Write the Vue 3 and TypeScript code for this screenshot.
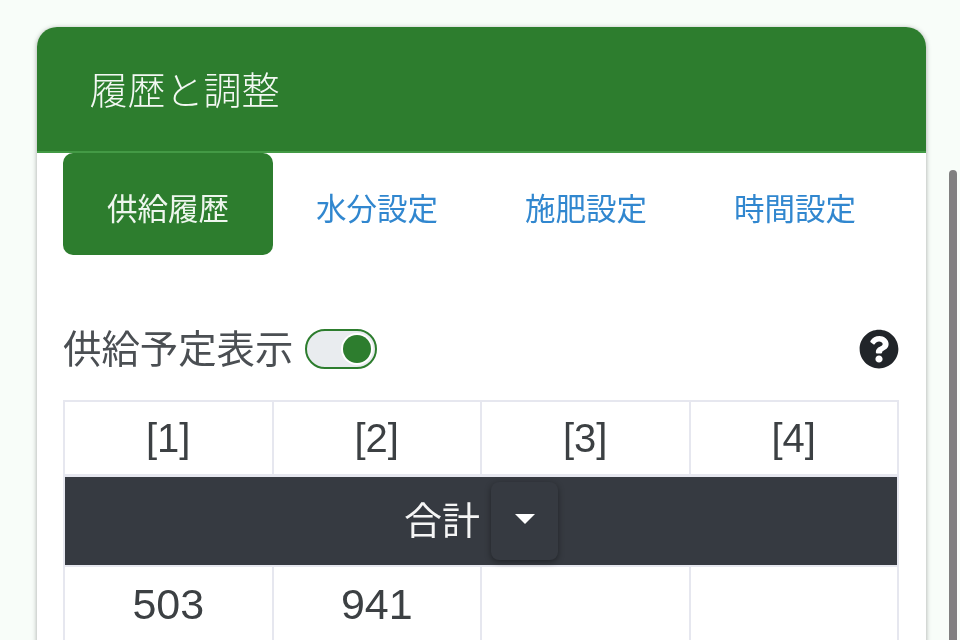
<script setup lang="ts">
const tabs = ['供給履歴', '水分設定', '施肥設定', '時間設定']
const heads = ['[1]', '[2]', '[3]', '[4]']
const values = ['503', '941', '', '']
</script>

<template>
  <div class="page">
    <section class="card">
      <header class="card-head">履歴と調整</header>
      <div class="card-body">
        <nav class="tabs">
          <a v-for="(t, i) in tabs" :key="t" class="tab" :class="{ active: i === 0 }">{{ t }}</a>
        </nav>
        <div class="option-row">
          <span class="option-label">供給予定表示</span>
          <span class="toggle"><span class="knob"></span></span>
          <svg class="help" viewBox="0 0 512 512" aria-hidden="true">
            <path fill="#212529" d="M504 256c0 136.997-111.043 248-248 248S8 392.997 8 256C8 119.083 119.043 8 256 8s248 111.083 248 248zM262.655 90c-54.497 0-89.255 22.957-116.549 63.758-3.536 5.286-2.353 12.415 2.715 16.258l34.699 26.31c5.205 3.947 12.621 3.008 16.665-2.122 17.864-22.658 30.113-35.797 57.303-35.797 20.429 0 45.698 13.148 45.698 32.958 0 14.976-12.363 22.667-32.534 33.976C247.128 238.528 216 254.941 216 296v4c0 6.627 5.373 12 12 12h56c6.627 0 12-5.373 12-12v-1.333c0-28.462 83.186-29.647 83.186-106.667 0-58.002-60.165-102-116.531-102zM256 338c-25.365 0-46 20.635-46 46 0 25.364 20.635 46 46 46s46-20.636 46-46c0-25.365-20.635-46-46-46z" />
          </svg>
        </div>
        <table class="grid">
          <thead>
            <tr>
              <th v-for="h in heads" :key="h">{{ h }}</th>
            </tr>
          </thead>
          <tbody>
            <tr>
              <td class="total" colspan="4">
                <div class="total-inner">
                  <span class="total-label">合計</span>
                  <button class="caret-btn" type="button"><span class="caret"></span></button>
                </div>
              </td>
            </tr>
            <tr>
              <td v-for="(v, i) in values" :key="i" class="value">{{ v }}</td>
            </tr>
          </tbody>
        </table>
      </div>
    </section>
    <div class="scroll-thumb"></div>
  </div>
</template>

<style>
html, body { margin: 0; overflow: hidden; background: #f8fdf9; }
</style>

<style scoped>
.page {
  position: relative;
  height: 640px;
  overflow: hidden;
  padding: 27px 34px 0 37px;
  box-sizing: border-box;
  background: #f8fdf9;
  font-family: "Liberation Sans", "Noto Sans CJK JP", sans-serif;
  color: #3c4043;
  filter: blur(0.4px);
}
.card {
  background: #fff;
  border-radius: 20px 20px 0 0;
  box-shadow: 0 1px 5px rgba(0, 0, 0, 0.35);
  height: 900px;
}
.card-head {
  box-sizing: border-box;
  height: 126px;
  padding: 39px 0 0 52.5px;
  background: #2d7d2e;
  border-bottom: 2px solid #439a45;
  border-radius: 20px 20px 0 0;
  color: #f3f8f3;
  font-size: 38px;
  line-height: 50px;
  font-weight: 300;
}
.card-body { padding: 0 27px 0 26px; }
.tabs {
  display: grid;
  grid-template-columns: repeat(4, 1fr);
}
.tab {
  box-sizing: border-box;
  height: 102px;
  padding-top: 5px;
  display: flex;
  align-items: center;
  justify-content: center;
  font-size: 30.5px;
  color: #3187cf;
  border-radius: 10px;
  margin-right: -1px;
}
.tab.active {
  background: #2d7d2e;
  color: #eef6ee;
}
.option-row {
  display: flex;
  align-items: center;
  height: 40px;
  margin-top: 74px;
}
.option-label {
  font-size: 38.4px;
  line-height: 40px;
  padding-top: 2px;
  color: #4b4f53;
}
.toggle {
  box-sizing: border-box;
  width: 72px;
  height: 40px;
  margin-left: 12px;
  border: 2.5px solid #2d7d2e;
  border-radius: 20px;
  background: #e9ecef;
  display: flex;
  align-items: center;
  justify-content: flex-end;
  padding-right: 4px;
}
.knob {
  width: 28px;
  height: 28px;
  border-radius: 50%;
  background: #2d7d2e;
  box-shadow: 0 0 0 2px #fff;
}
.help {
  width: 40px;
  height: 40px;
  margin-left: auto;
}
.grid {
  display: table;
  width: 836px;
  margin-top: 31px;
  border-collapse: collapse;
  table-layout: fixed;
}
.grid th,
.grid td {
  border: 2px solid #e6e7ef;
  padding: 0;
  text-align: center;
  font-weight: 400;
}
.grid th {
  height: 74px;
  font-size: 40px;
  color: #3c4043;
  padding-top: 1px;
  box-sizing: border-box;
}
.grid td.total {
  height: 88px;
  background: #363a41;
  border-top: 3px solid #e6e7ef;
  color: #f5f5f5;
  font-size: 38px;
}
.total-inner {
  display: flex;
  align-items: center;
  justify-content: center;
  gap: 11px;
}
.total-label {
  line-height: 40px;
}
.caret-btn {
  width: 67px;
  height: 78px;
  padding: 0 0 4px;
  border: 0;
  border-radius: 8px;
  background: #363a41;
  box-shadow: 0 2px 6px rgba(0, 0, 0, 0.4);
  display: flex;
  align-items: center;
  justify-content: center;
}
.caret {
  width: 0;
  height: 0;
  border-left: 10px solid transparent;
  border-right: 10px solid transparent;
  border-top: 10px solid #fff;
}
.grid td.value {
  height: 76px;
  font-size: 43px;
  color: #3c4043;
}
.scroll-thumb {
  position: absolute;
  left: 949px;
  top: 170px;
  width: 8px;
  height: 480px;
  border-radius: 4px 4px 0 0;
  background: #808080;
}
</style>
